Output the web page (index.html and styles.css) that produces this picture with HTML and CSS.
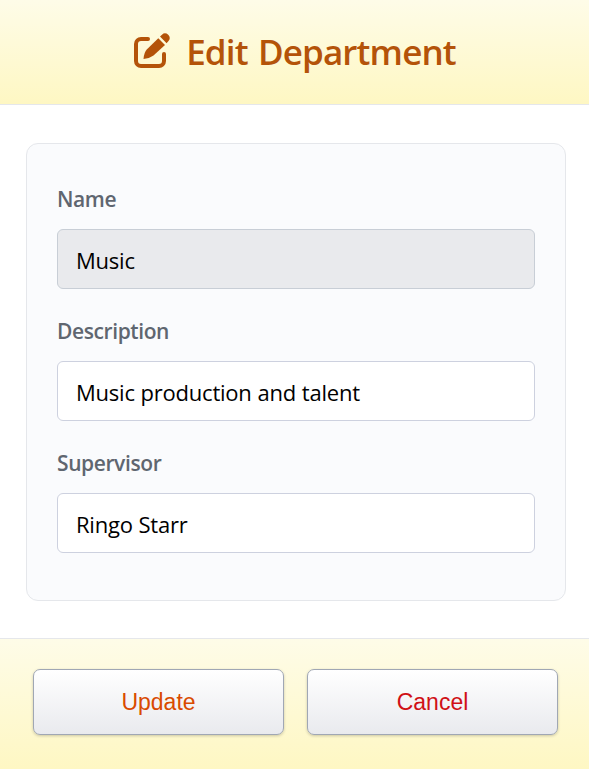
FILE: index.html
```html
<!DOCTYPE html>
<html lang="en">
<head>
<meta charset="utf-8">
<title>Edit Department</title>
<link rel="stylesheet" href="styles.css">
</head>
<body>
<form class="dialog">
  <header class="header">
    <svg class="icon" viewBox="0 0 36 36" fill="currentColor" aria-hidden="true">
      <path d="M14 6H7a5 5 0 0 0-5 5v17a5 5 0 0 0 5 5h18a5 5 0 0 0 5-5v-7" fill="none" stroke="currentColor" stroke-width="4" stroke-linecap="round"/>
      <path d="M24.300 5.200L31 11.900 19.500 22.500Q15.500 25.500 9.500 26Q10 19.500 13 16.300Z"/>
      <path d="M26 3.500L28 1.700Q31-1 34.200 1.800Q37.200 5 34.500 8L32.600 10.200Z"/>
    </svg>
    <h1 class="title">Edit Department</h1>
  </header>
  <main class="body">
    <div class="panel">
      <label class="label" for="name">Name</label>
      <input class="input readonly" id="name" value="Music" readonly>
      <label class="label" for="description">Description</label>
      <input class="input" id="description" value="Music production and talent">
      <label class="label" for="supervisor">Supervisor</label>
      <input class="input" id="supervisor" value="Ringo Starr">
    </div>
  </main>
  <footer class="footer">
    <button class="button update" type="button">Update</button>
    <button class="button cancel" type="button">Cancel</button>
  </footer>
</form>
</body>
</html>
```
FILE: styles.css
```css
* { box-sizing: border-box; }
body { margin: 0; background: #fff; font-family: "Open Sans", "Noto Sans", sans-serif; }
.dialog { height: 769px; display: flex; flex-direction: column; }
.header { height: 105px; display: flex; align-items: center; justify-content: center; gap: 16px; padding-left: 1px; color: #b45309; background: linear-gradient(#fefce8, #fef7c3); border-bottom: 1px solid #e5e7eb; }
.icon { width: 36px; height: 36px; margin-top: -3px; overflow: visible; }
.title { margin: 0; font-size: 35px; line-height: 48px; font-weight: 600; letter-spacing: -0.86px; word-spacing: 2px; }
.body { flex: 1; padding: 38px 23px 37px 26px; }
.panel { height: 458px; padding: 39px 30px; background: #fafbfd; border: 1px solid #e5e7eb; border-radius: 12px; }
.label { display: block; height: 32px; margin-bottom: 14px; font-size: 21px; line-height: 32px; font-weight: 600; letter-spacing: -0.4px; color: #5f6670; }
.input { display: block; width: 100%; height: 60px; margin-bottom: 26px; padding: 2px 18px 0; border: 1px solid #cdd1df; border-radius: 6px; background: #fff; color: #000; font: 22px "Open Sans", sans-serif; letter-spacing: -0.23px; word-spacing: 0.4px; }
.readonly { background: #e9eaed; border-color: #c8ced6; }
.footer { height: 131px; display: flex; gap: 23px; padding: 30px 31px 34px 33px; background: linear-gradient(#fefce8, #fef7c3); border-top: 1px solid #e5e7eb; }
.button { flex: 1; border: 1px solid #a0a7b4; border-radius: 7px; background: linear-gradient(#fff, #e9eaee); box-shadow: 0 1px 3px #0003; font: 23px "Liberation Sans", sans-serif; }
.update { color: #d94a00; }
.cancel { color: #d01016; }
```
